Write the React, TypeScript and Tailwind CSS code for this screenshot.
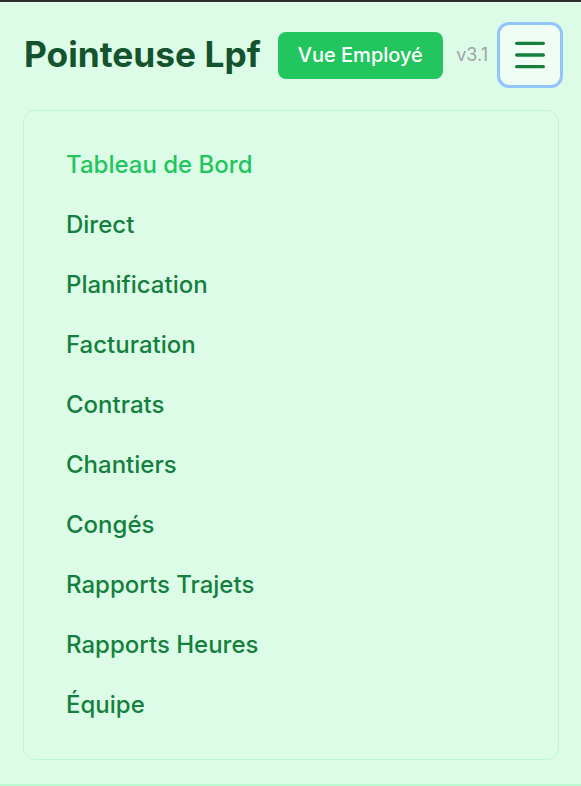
import { Menu } from "lucide-react";

const items = [
  "Tableau de Bord",
  "Direct",
  "Planification",
  "Facturation",
  "Contrats",
  "Chantiers",
  "Congés",
  "Rapports Trajets",
  "Rapports Heures",
  "Équipe",
];

export default function App() {
  return (
    <div
      className="h-[786px] border-t-2 border-b-2 border-t-[#2d2d2d] border-b-[#bbf7d0] bg-[#dcfce7]"
      style={{ fontFamily: "Inter, 'Noto Sans', sans-serif" }}
    >
      <header className="flex items-center pl-6 pr-[18px] pt-5 pb-[22px]">
        <h1 className="text-[35.3px] leading-none font-bold text-[#14532d]">Pointeuse Lpf</h1>
        <button className="ml-[17px] h-[47px] rounded-lg bg-[#22c55e] px-5 text-xl font-medium text-white">
          Vue Employé
        </button>
        <span className="ml-auto text-lg text-[#9ca3af]">v3.1</span>
        <button className="ml-[9px] flex h-[66px] w-[66px] items-center justify-center rounded-xl border-[3px] border-[#93c5fd] bg-[#f0fdf4] text-[#15803d]">
          <Menu size={40} strokeWidth={2} />
        </button>
      </header>
      <nav className="ml-[23px] mr-[22px] rounded-xl border border-[#bbf7d0] bg-[#dcfce7] p-6">
        <ul>
          {items.map((item, i) => (
            <li
              key={item}
              className={`px-[18px] py-[14px] text-2xl leading-8 font-medium ${
                i === 0 ? "text-[#22c55e]" : "text-[#15803d]"
              }`}
            >
              {item}
            </li>
          ))}
        </ul>
      </nav>
    </div>
  );
}
